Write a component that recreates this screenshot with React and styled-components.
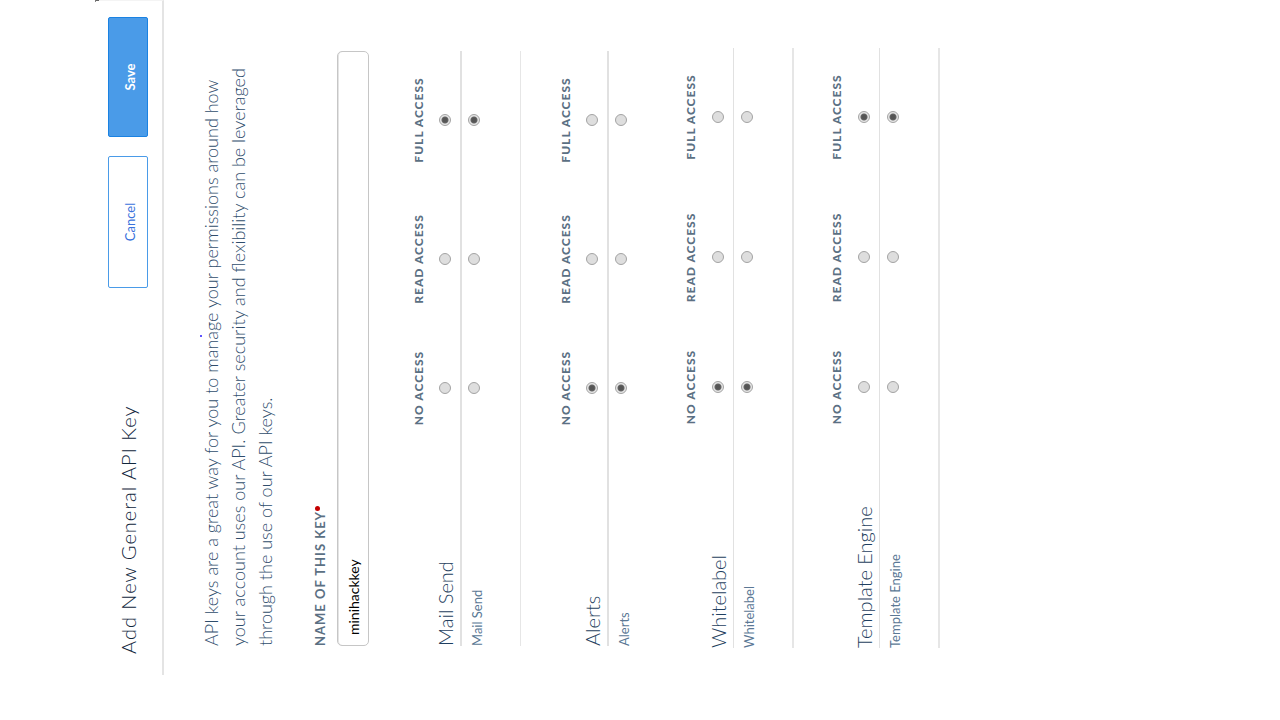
import React from "react";
import styled, { createGlobalStyle } from "styled-components";

const GlobalStyle = createGlobalStyle`
  *, *::before, *::after { box-sizing: border-box; }
  body {
    margin: 0;
    overflow: hidden;
    background: #fff;
    font-family: Lato, "Liberation Sans", sans-serif;
    font-weight: 300;
    color: #2f4d6c;
  }
`;

const Viewport = styled.div`
  width: 100vw;
  height: 100vh;
`;

/* The page is laid out upright, then turned a quarter counter-clockwise. */
const Sheet = styled.div`
  width: 100vh;
  min-height: 100vw;
  padding-top: 95px;
  transform: translateY(100vh) rotate(-90deg);
  transform-origin: top left;
`;

const Header = styled.header`
  position: relative;
  display: flex;
  align-items: center;
  gap: 19px;
  height: 69px;
  margin-left: 45px;
  padding: 0 16px 2px 21px;
  border-right: 1px solid #f4f4f4;
  border-bottom: 2px solid #e4e4e4;

  &::after {
    content: "";
    position: absolute;
    top: 0;
    right: -1px;
    width: 2px;
    height: 4px;
    border-top: 1px solid #888;
    border-right: 1px solid #666;
  }
`;

const Title = styled.h1`
  flex: 1;
  margin: 0;
  font-size: 20px;
  line-height: 28px;
  font-weight: 300;
  letter-spacing: 1px;
  color: #10263c;
`;

const Button = styled.button`
  width: ${(p) => (p.$primary ? 120 : 132)}px;
  height: 40px;
  padding: 4px 0 0;
  border: 1px solid ${(p) => (p.$primary ? "#1a82e2" : "#4a9be8")};
  border-radius: 2px;
  background: ${(p) => (p.$primary ? "#4a9be8" : "#fff")};
  color: ${(p) => (p.$primary ? "#fff" : "#3a72dc")};
  font-family: inherit;
  font-size: 13px;
  font-weight: ${(p) => (p.$primary ? 700 : 400)};
`;

const Content = styled.main`
  padding: 34px 51px 0 74px;
`;

const Intro = styled.p`
  position: relative;
  margin: 0 0 30px;
  font-size: 18px;
  line-height: 27px;

  &::before {
    content: "";
    position: absolute;
    top: 2px;
    left: 309px;
    width: 2px;
    height: 2px;
    border-radius: 1px;
    background: #2a1aff;
  }
`;

const Line = styled.span`
  display: block;
  white-space: nowrap;
`;

const NameLabel = styled.label`
  display: flex;
  align-items: center;
  height: 20px;
  margin-bottom: 8px;
  padding-top: 1px;
  font-size: 13px;
  font-weight: 700;
  letter-spacing: 1px;
  color: #5b7083;
`;

const Required = styled.span`
  width: 5px;
  height: 5px;
  margin-top: -4px;
  border-radius: 50%;
  background: #c40000;
`;

const NameInput = styled.input`
  display: block;
  width: 100%;
  height: 32px;
  margin-bottom: 39px;
  padding: 0 10px;
  border: 1px solid #c6c6c6;
  border-radius: 5px;
  box-shadow: inset 0 1px 0 #e4e4e4;
  background: #fff;
  font: 400 14px Lato, "Liberation Sans", sans-serif;
  color: #000;
`;

const Table = styled.table`
  width: calc(100% + ${(p) => (p.$wide ? 5 : 0)}px);
  margin: 0 0 ${(p) => p.$gap}px ${(p) => (p.$wide ? -2 : 0)}px;
  table-layout: fixed;
  border-collapse: separate;
  border-spacing: 0;
`;

const Column = styled.col`
  width: ${(p) => p.$width}px;
`;

const AccessHead = styled.th`
  height: 24px;
  padding: 0 0 2px;
  font-size: 12px;
  line-height: 22px;
  font-weight: 900;
  letter-spacing: 1px;
  white-space: nowrap;
  color: #5b7083;
`;

const TitleCell = styled.th`
  height: 30px;
  padding: 0 0 2px;
  border-bottom: ${(p) => (p.$wide ? 1 : 2)}px solid #e1e1e1;
  text-align: left;
  font-size: 20px;
  line-height: 24px;
  font-weight: 300;
  white-space: nowrap;
  color: #1f3f60;
`;

const GroupCell = styled.td`
  height: 30px;
  padding: 0 0 2px;
  border-bottom: ${(p) => (p.$wide ? 1 : 2)}px solid #e1e1e1;
  text-align: center;
`;

const ruleOf = (p) => {
  const color = p.$rule ? "#e6e6e6" : "transparent";
  return `${p.$wide ? 2 : 1}px solid ${color}`;
};

const RowName = styled.th`
  height: ${(p) => (p.$wide ? 60 : 59)}px;
  padding: 5px 0 0;
  border-bottom: ${ruleOf};
  vertical-align: top;
  text-align: left;
  font-size: 13px;
  line-height: 20px;
  font-weight: 400;
  white-space: nowrap;
  color: #5b7895;
`;

const RowCell = styled.td`
  padding: ${(p) => (p.$wide ? 7 : 6)}px 0 0;
  border-bottom: ${ruleOf};
  vertical-align: top;
  text-align: center;
`;

const Radio = styled.input`
  appearance: none;
  display: block;
  width: 12px;
  height: 12px;
  margin: 0 auto;
  border: 1px solid #a3a3a3;
  border-radius: 50%;
  background: #dedede;

  &:checked {
    background: radial-gradient(circle, #555 0 2px, #666 3px, #e6e6e6 4px);
  }
`;

const LEVELS = ["No Access", "Read Access", "Full Access"];

const GROUPS = [
  { name: "Mail Send", level: 2, gap: 34, wide: false, rule: true },
  { name: "Alerts", level: 0, gap: 12, wide: false, rule: false },
  { name: "Whitelabel", level: 0, gap: 32, wide: true, rule: true },
  { name: "Template Engine", level: 2, gap: 0, wide: true, rule: true },
];

function PermissionGroup({ name, level, gap, wide, rule }) {
  const widths = wide ? [116, 143, 138] : [118, 140, 138];
  return (
    <Table $wide={wide} $gap={gap}>
      <colgroup>
        <col />
        {widths.map((w, i) => (
          <Column key={i} $width={w} />
        ))}
      </colgroup>
      <thead>
        <tr>
          <td />
          {LEVELS.map((l) => (
            <AccessHead key={l} scope="col">
              {l.toUpperCase()}
            </AccessHead>
          ))}
        </tr>
      </thead>
      <tbody>
        <tr>
          <TitleCell scope="row" $wide={wide}>
            {name}
          </TitleCell>
          {LEVELS.map((l, i) => (
            <GroupCell key={l} $wide={wide}>
              <Radio
                type="radio"
                name={`${name} group`}
                aria-label={`${name} group: ${l}`}
                defaultChecked={i === level}
              />
            </GroupCell>
          ))}
        </tr>
        <tr>
          <RowName scope="row" $wide={wide} $rule={rule}>
            {name}
          </RowName>
          {LEVELS.map((l, i) => (
            <RowCell key={l} $wide={wide} $rule={rule}>
              <Radio
                type="radio"
                name={name}
                aria-label={`${name}: ${l}`}
                defaultChecked={i === level}
              />
            </RowCell>
          ))}
        </tr>
      </tbody>
    </Table>
  );
}

export default function App() {
  return (
    <Viewport>
      <GlobalStyle />
      <Sheet>
        <Header>
          <Title>Add New General API Key</Title>
          <Button type="button">Cancel</Button>
          <Button type="submit" $primary>
            Save
          </Button>
        </Header>
        <Content>
          <Intro>
            <Line>API keys are a great way for you to manage your permissions around how</Line>
            <Line>your account uses our API. Greater security and flexibility can be leveraged</Line>
            <Line>through the use of our API keys.</Line>
          </Intro>
          <NameLabel htmlFor="key-name">
            NAME OF THIS KEY
            <Required />
          </NameLabel>
          <NameInput id="key-name" type="text" defaultValue="minihackkey" />
          {GROUPS.map((g) => (
            <PermissionGroup key={g.name} {...g} />
          ))}
        </Content>
      </Sheet>
    </Viewport>
  );
}
